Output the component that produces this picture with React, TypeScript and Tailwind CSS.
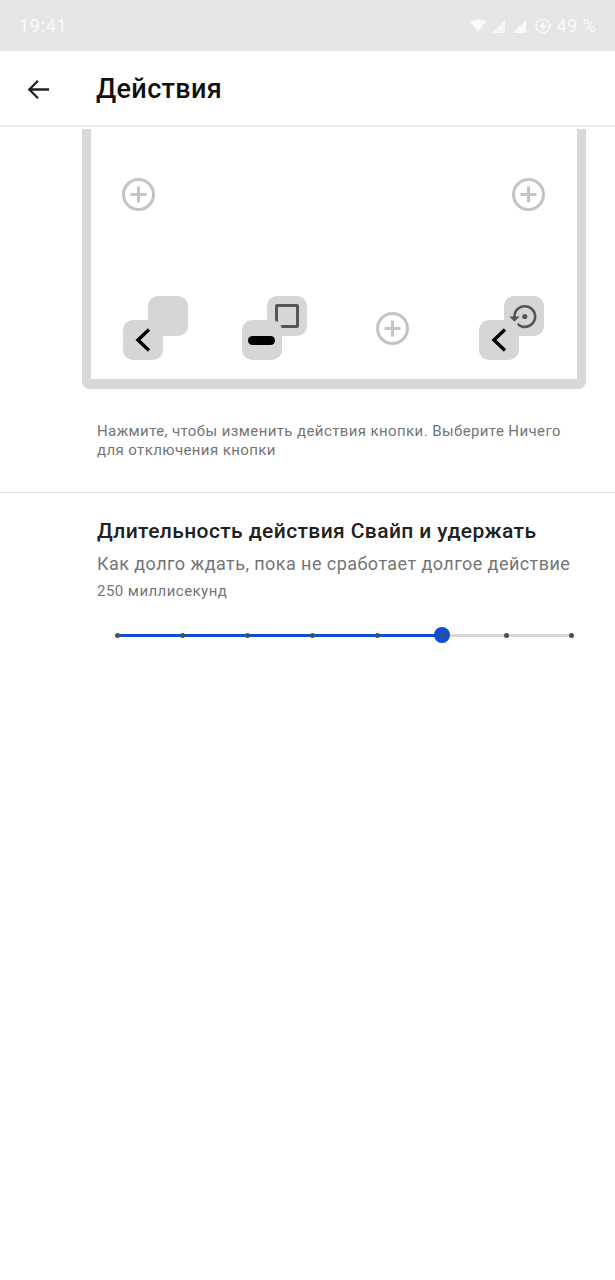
const KEY = 'absolute w-10 h-10 rounded-[10px] bg-[#d6d6d6] flex items-center justify-center'

function PlusIcon() {
  return (
    <svg width="33" height="33" viewBox="0 0 33 33" fill="none" stroke="#c4c4c4" strokeWidth="3">
      <circle cx="16.5" cy="16.5" r="15" />
      <path d="M16.5 8.5v16M8.5 16.5h16" />
    </svg>
  )
}

function Chevron() {
  return (
    <svg width="18" height="26" viewBox="0 0 18 26" fill="none" stroke="#000" strokeWidth="3.4">
      <path d="M15 2.5L4 13l11 10.5" />
    </svg>
  )
}

function RestoreIcon() {
  return (
    <svg width="31" height="31" viewBox="0 0 24 24" fill="#555">
      <path d="M13 3a9 9 0 0 0-9 9H1l3.89 3.89.07.14L9 12H6c0-3.87 3.13-7 7-7s7 3.13 7 7-3.13 7-7 7c-1.93 0-3.68-.79-4.94-2.06l-1.42 1.42A8.954 8.954 0 0 0 13 21a9 9 0 0 0 0-18z" />
      <circle cx="13" cy="12" r="2" />
    </svg>
  )
}

function KeyPair({ back, front }: { back?: React.ReactNode; front: React.ReactNode }) {
  return (
    <div className="relative w-[65px] h-16">
      <div className={`${KEY} top-0 right-0`}>{back}</div>
      <div className={`${KEY} bottom-0 left-0`}>{front}</div>
    </div>
  )
}

function StatusIcons() {
  return (
    <div className="flex items-center text-[#fafafa]">
      <svg width="16" height="13" viewBox="0 0 16 13" fill="currentColor" className="mr-[5px]">
        <path d="M0 2.5Q8 -1.5 16 2.5L8 13z" />
      </svg>
      <svg width="14" height="14" viewBox="0 0 14 14" fill="currentColor" className="mr-[7px] opacity-80">
        <path d="M14 1v13H1z" />
      </svg>
      <svg width="14" height="14" viewBox="0 0 14 14" fill="currentColor" className="mr-[9px]">
        <path d="M14 1v13H1z" />
      </svg>
      <svg width="16" height="18" viewBox="0 0 16 18" fill="none" stroke="currentColor" strokeWidth="1.6" className="mr-[6px]">
        <circle cx="8" cy="9" r="6.8" strokeDasharray="3 1" />
        <path d="M9.5 3.5L4.5 9.8h3L6.5 14.5l5-6.3h-3z" fill="currentColor" stroke="none" />
      </svg>
      <span className="text-[18px] leading-none tracking-[0.4px]">49 %</span>
    </div>
  )
}

export default function App() {
  const ticks = [0, 1, 2, 3, 4, 5, 6, 7]

  return (
    <div className="w-[615px] h-[1280px] bg-white flex flex-col overflow-hidden font-['Roboto',sans-serif]">
      {/* Status bar */}
      <div className="h-[51px] shrink-0 bg-[#e6e6e6] flex items-center justify-between pl-[19px] pr-[19px]">
        <span className="text-[18px] leading-none text-[#fafafa] tracking-[0.7px]">19:41</span>
        <StatusIcons />
      </div>

      {/* App bar */}
      <div className="h-[76px] shrink-0 flex items-center pt-[2px] border-b-2 border-[#eeeeee]">
        <div className="w-[96px] pl-[27px] shrink-0">
          <svg width="22" height="21" viewBox="0 0 24 22" fill="none" stroke="#222" strokeWidth="2.5">
            <path d="M24 11H3M12 1.5L2.5 11l9.5 9.5" />
          </svg>
        </div>
        <h1 className="text-[27px] leading-none font-medium text-[#111] tracking-[0.35px]">Действия</h1>
      </div>

      {/* Key layout preview */}
      <div className="mt-[2px] ml-[82px] w-[504px] border-x-[9px] border-b-[10px] border-[#d8d8d8] rounded-b-[8px] pt-[49px] pb-[19px] pl-[32px] pr-[33px]">
        <div className="flex justify-between -mx-px">
          <PlusIcon />
          <PlusIcon />
        </div>
        <div className="mt-[85px] flex justify-between">
          <KeyPair front={<Chevron />} />
          <KeyPair
            back={<div className="w-[24px] h-[24px] border-[3px] border-[#555] rounded-[2px]" />}
            front={<div className="w-[27px] h-[9px] rounded-full bg-black" />}
          />
          <div className="w-[65px] h-16 flex items-center justify-center">
            <PlusIcon />
          </div>
          <KeyPair back={<RestoreIcon />} front={<Chevron />} />
        </div>
      </div>

      <p className="mt-[33px] ml-[97px] w-[480px] text-[15px] leading-[19px] tracking-[0.4px] text-[#757575]">
        Нажмите, чтобы изменить действия кнопки. Выберите Ничего для отключения кнопки
      </p>

      <div className="mt-[32px] h-px bg-[#e4e4e4]" />

      {/* Duration setting */}
      <div className="pl-[97px] pt-[25px]">
        <h2 className="text-[21px] leading-[26px] font-medium text-[#212121] tracking-[0.4px]">Длительность действия Свайп и удержать</h2>
        <p className="mt-[8px] text-[18px] leading-[24px] text-[#757575] tracking-[0.44px] whitespace-nowrap">Как долго ждать, пока не сработает долгое действие</p>
        <p className="mt-[5px] text-[15px] leading-[20px] text-[#757575] tracking-[0.45px]">250 миллисекунд</p>

        <div className="relative mt-[26px] ml-[20px] w-[455px] h-4">
          <div className="absolute inset-x-0 top-[7px] h-[3px] bg-[#d9d9d9]" />
          <div className="absolute left-0 top-[7px] h-[3px] w-[325px] bg-[#0f4fd6]" />
          <div className="absolute left-[317px] top-0 w-4 h-4 rounded-full bg-[#0f4fd6]" />
          {ticks.map(i => (
            <div
              key={i}
              className="absolute top-[6px] w-[5px] h-[5px] rounded-full bg-[#4a4f5a]"
              style={{ left: i * 64.9 - 2 }}
            />
          ))}
        </div>
      </div>
    </div>
  )
}
